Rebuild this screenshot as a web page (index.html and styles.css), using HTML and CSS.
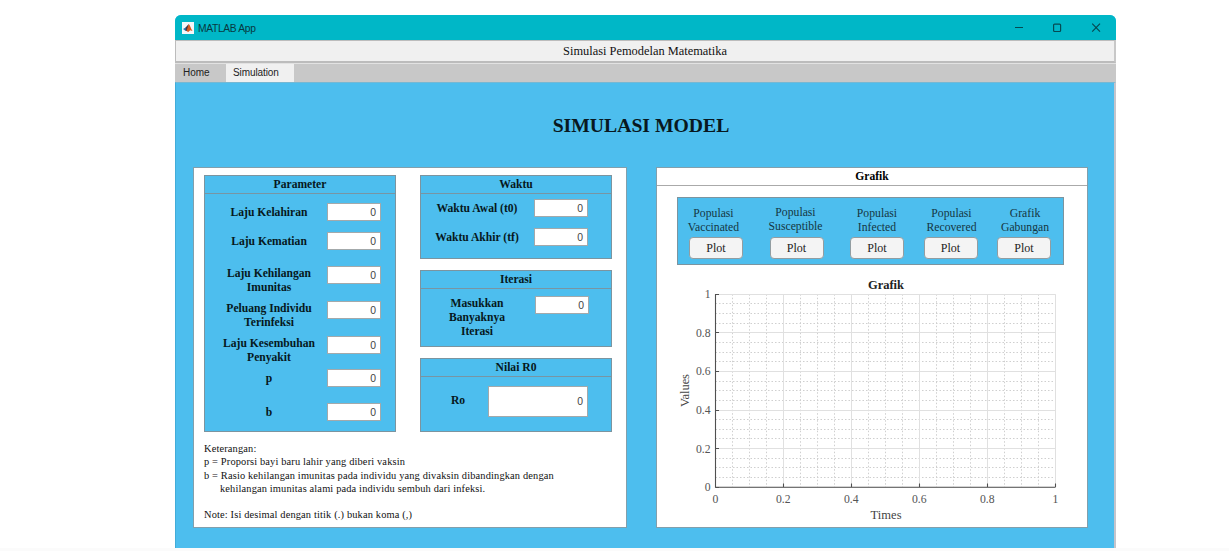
FILE: index.html
```html
<!DOCTYPE html>
<html lang="id">
<head>
<meta charset="utf-8">
<title>MATLAB App</title>
<link rel="stylesheet" href="styles.css">
</head>
<body>
<main class="window">
  <header class="titlebar">
    <svg class="logo" width="12" height="12" viewBox="0 0 12 12">
      <rect width="12" height="12" fill="#f4f6f8"/>
      <path d="M1 7 4 5.2 6.5 2.5 5.5 7.5 3.7 9Z" fill="#2878b5"/>
      <path d="M4 5.2 6.8 2 6 7.5 4.6 9.2 3.5 8Z" fill="#483040"/>
      <path d="M6.8 2C8.2 3.2 8.7 6.5 10.5 9L8.2 8.3 6 10.2 4.6 8.6Z" fill="#d95a1e"/>
    </svg>
    <span class="app-name">MATLAB App</span>
    <svg class="controls" width="90" height="12" viewBox="0 0 90 12" fill="none" stroke="#064a52" stroke-width="1.2">
      <path d="M1 5.5h8"/>
      <rect x="39.6" y="2.1" width="7" height="7.4" rx="1"/>
      <path d="M78.2 1.7l7.8 8M86 1.7l-7.8 8"/>
    </svg>
  </header>
  <div class="banner"><span>Simulasi Pemodelan Matematika</span></div>
  <nav class="tabs"><span class="tab home">Home</span><span class="tab active">Simulation</span></nav>
  <section class="page">
    <h1>SIMULASI MODEL</h1>
    <div class="columns">
      <div class="card inputs">
        <div class="panels">
          <div class="panel parameter">
            <h2>Parameter</h2>
            <div class="row r1"><label>Laju Kelahiran</label><span class="field">0</span></div>
            <div class="row r2"><label>Laju Kematian</label><span class="field">0</span></div>
            <div class="row r3 double"><label>Laju Kehilangan<br>Imunitas</label><span class="field">0</span></div>
            <div class="row r4 double"><label>Peluang Individu<br>Terinfeksi</label><span class="field">0</span></div>
            <div class="row r5 double"><label>Laju Kesembuhan<br>Penyakit</label><span class="field">0</span></div>
            <div class="row r6"><label>p</label><span class="field">0</span></div>
            <div class="row r7"><label>b</label><span class="field">0</span></div>
          </div>
          <div class="stack">
            <div class="panel waktu">
              <h2>Waktu</h2>
              <div class="row"><label>Waktu Awal (t0)</label><span class="field">0</span></div>
              <div class="row r2"><label>Waktu Akhir (tf)</label><span class="field">0</span></div>
            </div>
            <div class="panel iterasi">
              <h2>Iterasi</h2>
              <div class="row double"><label>Masukkan<br>Banyaknya<br>Iterasi</label><span class="field">0</span></div>
            </div>
            <div class="panel nilai">
              <h2>Nilai R0</h2>
              <div class="row"><label>Ro</label><span class="field">0</span></div>
            </div>
          </div>
        </div>
        <div class="notes">
          <p>Keterangan:</p>
          <p>p = Proporsi bayi baru lahir yang diberi vaksin</p>
          <p>b = Rasio kehilangan imunitas pada individu yang divaksin dibandingkan dengan</p>
          <p class="indent">kehilangan imunitas alami pada individu sembuh dari infeksi.</p>
          <p class="note">Note: Isi desimal dengan titik (.) bukan koma (,)</p>
        </div>
      </div>
      <div class="card graph">
        <h2>Grafik</h2>
        <div class="panel plots">
          <div class="plot first"><span>Populasi<br>Vaccinated</span><button>Plot</button></div>
          <div class="plot raised"><span>Populasi<br>Susceptible</span><button>Plot</button></div>
          <div class="plot"><span>Populasi<br>Infected</span><button>Plot</button></div>
          <div class="plot shifted"><span>Populasi<br>Recovered</span><button>Plot</button></div>
          <div class="plot shifted"><span>Grafik<br>Gabungan</span><button>Plot</button></div>
        </div>
        <svg class="chart" width="400" height="250" viewBox="670 275 400 250">
          <g id="minor" class="minor"></g>
          <g id="major" class="major"></g>
          <path id="axis" class="axis" d="M715.5 294V487.3H1055.5"/>
          <g id="labels"></g>
          <text class="chart-title" x="886" y="289" textLength="36">Grafik</text>
          <text class="axis-title" x="886" y="519" text-anchor="middle" textLength="31">Times</text>
          <text class="axis-title" transform="translate(689 390.5) rotate(-90)" text-anchor="middle" textLength="33">Values</text>
        </svg>
      </div>
    </div>
  </section>
</main>
<script src="chart.js"></script>
</body>
</html>
```

FILE: chart.js
```js
const left = 715.5, top_ = 294.2, w = 340, h = 193;
const ns = 'http://www.w3.org/2000/svg';
function add(parent, tag, attrs, text) {
  const el = document.createElementNS(ns, tag);
  for (const k in attrs) el.setAttribute(k, attrs[k]);
  if (text) el.textContent = text;
  document.getElementById(parent).appendChild(el);
}
let ticks = '';
for (let i = 0; i <= 20; i++) {
  const x = left + w * i / 20, y = top_ + h - h * i / 20;
  const group = i % 4 ? 'minor' : 'major';
  const px = Math.floor(x) + 0.5, py = Math.floor(y) + 0.5;
  add(group, 'path', { d: `M${px} ${top_}V${top_ + h}M${left} ${py}H${left + w}` });
  if (i % 4 === 0) {
    const value = String(i / 20);
    ticks += `M${px} 487v-3.5M${left} ${py}h3.5`;
    add('labels', 'text', { x: x - 0.2, y: 502.5, 'text-anchor': 'middle', class: 'tick' }, value);
    add('labels', 'text', { x: 710.5, y: y + 4, 'text-anchor': 'end', class: 'tick' }, value);
  }
}
const axis = document.getElementById('axis');
axis.setAttribute('d', axis.getAttribute('d') + ticks);
```

FILE: styles.css
```css
* { box-sizing: border-box; }
body { margin: 0; height: 551px; overflow: hidden; padding: 15px 0 0 175px; background: linear-gradient(#fff 548px, #fbfbfb 548px); font-family: "Liberation Serif", serif; color: #111; }
h1, h2, p { margin: 0; }
.window { width: 941px; height: 533px; border-radius: 6px 6px 0 0; overflow: hidden; background: #4dbeee; }
.titlebar { height: 25px; background: #00b7c7; display: flex; align-items: center; padding: 1px 17px 0 7px; }
.app-name { font: 10.3px/14px "Liberation Sans", sans-serif; letter-spacing: -.35px; padding-top: 1px; color: #083940; margin-left: 4px; }
.controls { margin-left: auto; margin-right: -5px; }
.banner { height: 23px; background: #f0f0f0; border: solid #bcbcbc; border-width: 1px 2px 2px 1px; border-right-color: #c8c8c8; text-align: center; font-size: 12.4px; line-height: 20px; white-space: nowrap; }
.tabs { height: 19px; background: #c8c8c8; border-top: 1px solid #e2e2e2; display: flex; font: 10px/18px "Liberation Sans", sans-serif; color: #222; }
.tab { padding-left: 8px; width: 51px; }
.active { padding-left: 7px; width: 68px; letter-spacing: -.1px; background: #f0f0f0; }
.page { height: 466px; border-left: 1px solid #42acd8; border-right: 2px solid #c4c4cb; border-top: 1px solid #75b8d4; padding-left: 17px; }
h1 { font-size: 19.7px; line-height: 24px; margin: 30px 0; padding-right: 25px; text-align: center; color: #081820; }
.columns { display: flex; gap: 29px; }
.card { background: #fff; border: 1px solid #829fac; height: 361px; }
.inputs { width: 434px; padding: 7px 10px; }
.graph { width: 432px; }
h2 { height: 18px; border-bottom: 1px solid #7895a3; text-align: center; font-size: 11.6px; line-height: 18px; color: #061820; }
.graph h2 { border-color: #aaa; line-height: 17px; color: #000; }
.panels { display: flex; gap: 24px; height: 257px; }
.panel { background: #4dbeee; border: 1px solid #7c949f; }
.parameter { width: 192px; }
.stack { width: 192px; display: flex; flex-direction: column; }
.row { display: flex; height: 18px; color: #061820; }
label { width: 112px; padding: 3px 0 0; margin: 0 2px 0 8px; text-align: center; font-size: 11.6px; font-weight: bold; line-height: 14px; white-space: nowrap; }
.double label { padding-top: 1px; }
.field { width: 54px; height: 18px; border: 1px solid #a3a9ab; background: #fff; text-align: right; padding-right: 4px; font: 10.4px/17px "Liberation Sans", sans-serif; color: #444; }
.r1 { margin-top: 10px; } .r2 { margin-top: 11px; } .r3 { margin-top: 16px; }
.r4, .r5 { margin-top: 17px; } .r6 { margin-top: 15px; } .r7 { margin-top: 16px; }
.parameter .r1 { margin-top: 9px; }
.waktu { height: 84px; }
.waktu .row { margin-top: 5px; }
.waktu .r2 { margin-top: 11px; }
.waktu label { width: 112px; margin: 0 1px 0 0; }
.iterasi { height: 77px; margin-top: 11px; }
.iterasi .row { margin-top: 7px; }
.iterasi label { width: 112px; margin: 0 2px 0 0; }
.nilai { height: 74px; margin-top: 11px; }
.nilai .row { height: 31px; margin-top: 9px; }
.nilai label { width: 60px; margin: 0 0 0 7px; padding-top: 8px; }
.nilai .field { width: 100px; height: 31px; line-height: 29px; }
.notes { font-size: 10.4px; letter-spacing: .15px; line-height: 13.3px; padding-top: 10px; white-space: nowrap; }
.indent { padding-left: 16px; }
.note { padding-top: 13px; }
.plots { width: 387px; height: 68px; margin: 11px 0 0 20px; padding: 8px 12px 0 11px; display: flex; justify-content: space-between; }
.plots .plot:nth-child(2) { margin-left: 7px; margin-right: 7px; }
.plot { width: 54px; display: flex; flex-direction: column; align-items: center; color: #153642; font-size: 11.7px; line-height: 14px; text-align: center; white-space: nowrap; }
.plot span { height: 31px; padding-top: 1px; }
.first span { margin-left: -5px; }
.raised span { padding-top: 0; margin-left: -2px; }
.shifted span { margin-left: 2px; }
button { width: 54px; height: 22px; padding: 0; border: 1px solid #929da1; border-radius: 4px; background: #f4f4f4; font: 12px/18px "Liberation Serif", serif; color: #222; }
.chart { display: block; margin: 10px 0 0 13px; }
.minor { stroke: #cfcfcf; stroke-dasharray: 1.5 2; }
.major { stroke: #e0e0e0; }
.axis { fill: none; stroke: #505050; stroke-width: 1.1; }
.tick { font-size: 11.7px; fill: #555; }
.axis-title { font-size: 12.5px; fill: #444; }
.chart-title { font-size: 12.5px; font-weight: bold; fill: #222; text-anchor: middle; }
```
